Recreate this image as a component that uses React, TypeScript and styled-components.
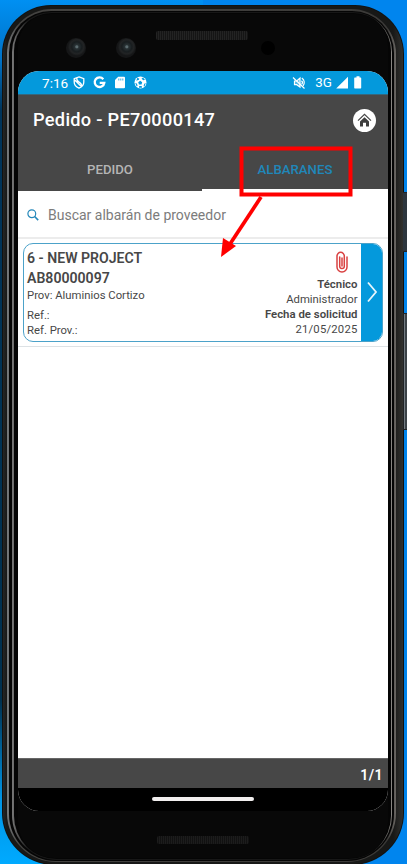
import React from "react";
import styled, { createGlobalStyle } from "styled-components";

const blue = "#0499dc";
const slate = "#474747";

const Global = createGlobalStyle`
  * { box-sizing: border-box; }
  body { margin: 0; font-family: Roboto, "Liberation Sans", sans-serif; overflow: hidden; }
`;

const Desktop = styled.main`
  position: relative;
  width: 407px;
  height: 864px;
  overflow: hidden;
  padding: 5px 0 0 2px;
  background: linear-gradient(90deg, transparent 50%, #0085ee 50%),
    linear-gradient(#0090f2 0, #0072c6 60px, #00345a 110px, #00304e 700px, #0095e6 800px, #00aaff 864px);
`;

const Ring = styled.div<{ $color: string; $pad: string; $radius: string }>`
  background: ${(p) => p.$color};
  padding: ${(p) => p.$pad};
  border-radius: ${(p) => p.$radius};
`;

const Frame = styled(Ring)`
  width: 402px;
`;

const Body = styled.div`
  display: flex;
  flex-direction: column;
  width: 370px;
  height: 844px;
  background: #080808;
  border-radius: 32px 32px 36px 36px;
`;

const TopBezel = styled.div`
  display: flex;
  align-items: flex-start;
  flex: none;
  height: 57px;
  padding: 24px 0 0 48px;
`;

const Camera = styled.div<{ $gap: number }>`
  width: 20px;
  height: 20px;
  margin-right: ${(p) => p.$gap}px;
  border-radius: 50%;
  background: radial-gradient(circle at 54% 44%, #5c6c70 0 1px, #293235 2px, #181d1f 5px, #222425 7px, #151617 9px);
`;

const Speaker = styled.div<{ $top: number; $dim?: boolean }>`
  width: 92px;
  height: ${(p) => (p.$dim ? 8 : 9)}px;
  margin-top: ${(p) => p.$top}px;
  border-radius: 2px;
  background: repeating-linear-gradient(90deg, #232323 0 1px, #151515 1px 2px);
  opacity: ${(p) => (p.$dim ? 0.75 : 1)};
`;

const Sensor = styled.div`
  width: 14px;
  height: 14px;
  margin: 3px 0 0 13px;
  border-radius: 50%;
  background: #000;
`;

const Screen = styled.div`
  display: flex;
  flex-direction: column;
  flex: none;
  width: 370px;
  height: 740px;
  overflow: hidden;
  background: #fff;
  border-radius: 21px;
`;

const StatusBar = styled.div`
  display: flex;
  align-items: center;
  flex: none;
  height: 23px;
  padding: 0 26px 0 24px;
  color: #fff;
  background: ${blue};
  svg { display: block; flex: none; }
`;

const Clock = styled.span`
  width: 31px;
  font-size: 13.6px;
  line-height: 22px;
`;

const StatusGroup = styled.div<{ $gap: number; $end?: boolean }>`
  display: flex;
  align-items: center;
  gap: ${(p) => p.$gap}px;
  margin-left: ${(p) => (p.$end ? "auto" : "0")};
`;

const Network = styled.span`
  margin: 0 4px 0 9px;
  font-size: 13.4px;
  line-height: 22px;
`;

const Header = styled.header`
  display: flex;
  align-items: center;
  justify-content: space-between;
  flex: none;
  height: 54px;
  padding: 0 12px 3px 15px;
  color: #fff;
  background: ${slate};
  border-top: 1px solid #34677d;
`;

const Title = styled.h1`
  margin: 0;
  font-size: 18.2px;
  font-weight: 500;
  line-height: 24px;
  letter-spacing: 0.3px;
  white-space: nowrap;
`;

const HomeButton = styled.button`
  width: 23px;
  height: 23px;
  padding: 0;
  border: 0;
  border-radius: 50%;
  background: #fff;
  svg { display: block; }
`;

const Tabs = styled.nav`
  display: grid;
  grid-template-columns: 184px 186px;
  flex: none;
  height: 43px;
  background: ${slate};
`;

const Tab = styled.button<{ $active?: boolean }>`
  padding: 2px 0 0;
  border: 0;
  border-bottom: 2px solid ${(p) => (p.$active ? "#fff" : slate)};
  color: ${(p) => (p.$active ? "#1f87ba" : "#b5b5b5")};
  background: transparent;
  font: 500 13.2px/20px Roboto, sans-serif;
`;

const Search = styled.label`
  display: flex;
  align-items: center;
  gap: 9px;
  flex: none;
  height: 48px;
  padding: 1px 9px 0;
  border-bottom: 2px solid #ececec;
`;

const SearchInput = styled.input`
  flex: 1;
  min-width: 0;
  padding: 0;
  border: 0;
  outline: 0;
  background: transparent;
  font: 400 14px/20px Roboto, sans-serif;
  color: #444;
  &::placeholder { color: #7c7c7c; opacity: 1; }
`;

const List = styled.section`
  flex: 1;
`;

const ListItem = styled.div`
  height: 108px;
  padding: 4px 5px;
  border-bottom: 1px solid #dde2e5;
`;

const Card = styled.article`
  display: flex;
  height: 99px;
  overflow: hidden;
  border: 1px solid #4ca2c9;
  border-radius: 10px;
  color: #474747;
`;

const CardLeft = styled.div`
  flex: 1;
  padding: 5px 0 0 3px;
`;

const CardTitle = styled.div`
  font-size: 14.1px;
  font-weight: 600;
  line-height: 19.5px;
  white-space: nowrap;
`;

const Detail = styled.div<{ $gap?: number }>`
  margin-top: ${(p) => p.$gap ?? 0}px;
  font-size: 11.3px;
  line-height: 15px;
  white-space: nowrap;
`;

const CardRight = styled.div`
  display: flex;
  flex-direction: column;
  align-items: flex-end;
  padding: 7px 3.5px 0 0;
  font-size: 11.4px;
  line-height: 15px;
  white-space: nowrap;
  svg { flex: none; margin: 0 10px 4px 0; }
`;

const Label = styled.strong`
  font-weight: 600;
`;

const Value = styled.span<{ $spacing?: number }>`
  font-size: 11.3px;
  letter-spacing: ${(p) => p.$spacing ?? 0}px;
`;

const OpenButton = styled.button`
  display: flex;
  align-items: center;
  justify-content: center;
  width: 21px;
  padding: 0 0 2px;
  border: 0;
  background: ${blue};
`;

const Footer = styled.footer`
  display: flex;
  align-items: center;
  justify-content: flex-end;
  flex: none;
  height: 30px;
  padding: 2px 5px 0 0;
  color: #fff;
  background: ${slate};
  border-top: 1px solid #666;
  font-size: 14.2px;
  font-weight: 600;
  letter-spacing: 0.4px;
`;

const NavBar = styled.div`
  display: flex;
  justify-content: center;
  flex: none;
  height: 23px;
  padding-top: 9px;
  background: #000;
`;

const HomeHandle = styled.div`
  width: 102px;
  height: 4px;
  border-radius: 2px;
  background: #f1eeee;
`;

const BottomBezel = styled.div`
  display: flex;
  justify-content: center;
  flex: 1;
`;

const SideKey = styled.div<{ $top: number; $height: number; $shine?: boolean }>`
  position: absolute;
  left: 403px;
  top: ${(p) => p.$top}px;
  width: 4px;
  height: ${(p) => p.$height}px;
  border: solid #202326;
  border-width: 1px 0;
  background: ${(p) => (p.$shine ? "linear-gradient(90deg, #202326 0 1px, #747c82 1px 2px, #3b4247 2px)" : "#2d363e")};
`;

const Annotation = styled.svg`
  position: absolute;
  left: 215px;
  top: 142px;
`;

function StatusIcons() {
  return (
    <StatusGroup $gap={8}>
      <svg width="12" height="13" viewBox="0 0 12 13" fill="none" stroke="currentColor" strokeWidth="1.3">
        <path d="M6 .9 10.8 2.6V6c0 2.8-1.8 5-4.8 6.1C3 11 1.2 8.8 1.2 6V2.6L6 .9ZM3.8 2c-.2 2.2.4 3.2 2.3 4.2 2 1 2.6 2.1 2.3 4M1.5 3.8l7 7" />
      </svg>
      <svg width="13" height="13" viewBox="0 0 13 13" fill="none" stroke="currentColor" strokeWidth="2.3">
        <path d="M10.3 3.2A4.8 4.8 0 1 0 11.3 6.8H6.7" />
      </svg>
      <svg width="12" height="13" viewBox="0 0 12 13">
        <path fill="currentColor" d="M4.2.8H10a1 1 0 0 1 1 1v9.4a1 1 0 0 1-1 1H2a1 1 0 0 1-1-1V4Z" />
        <path stroke={blue} strokeWidth=".8" d="M4.8 2.5v2M6.8 2.5v2M8.8 2.5v2" />
      </svg>
      <svg width="13" height="13" viewBox="0 0 13 13">
        <circle cx="6.5" cy="6.5" r="6" fill="currentColor" />
        <path fill={blue} d="m6.2 4.8 2 1.4-.7 2.4H5L4.2 6.2ZM3.4 1.8l2 .9-.5 1-2.6 1ZM9 1.5l2 2.3-1.7.5-1.8-1.5ZM1.2 7l1.6.6.8 2-.9.9ZM11.8 7l-1.5.7-.7 2.3.8.7ZM5.2 10h2.5l.3 1.7H5Z" />
      </svg>
    </StatusGroup>
  );
}

function SignalIcons() {
  return (
    <StatusGroup $gap={0} $end>
      <svg width="14" height="14" viewBox="0 0 14 14" fill="none" stroke="currentColor" strokeWidth="1.2">
        <path fill="#ffffff55" d="M2.5 5h2.2L8 2v9L4.7 8.7H2.5Z" />
        <path d="m1 1.5 11.5 11M9.5 4.8c1 .9 1 2.6.2 3.5M9.8 2.1c3 1.6 3 5.5 1.3 7.8" />
      </svg>
      <Network>3G</Network>
      <svg width="12" height="13" viewBox="0 0 12 13"><path fill="currentColor" d="M12 .7V12.5H.2Z" /></svg>
      <svg width="14" height="13" viewBox="0 0 14 13"><path fill="currentColor" d="M8.5.3h3v1.3h1.1q.6 0 .6.6v9.6q0 .6-.6.6H6.8q-.6 0-.6-.6V2.2q0-.6.6-.6h1.7Z" /></svg>
    </StatusGroup>
  );
}

function DeviceFrame({ children }: { children: React.ReactNode }) {
  return (
    <Frame $color="#111211" $pad="1px" $radius="49px 49px 52px 52px">
      <Ring $color="linear-gradient(90deg, #252625, #171817 4px, #171817 390px, #32312e)" $pad="3px 7px 2px 4px" $radius="48px 48px 51px 51px">
        <Ring $color="linear-gradient(90deg, #777a7c, #444341 12px, #3b3a38 380px, #696662)" $pad="2px 2px 1px" $radius="45px 45px 49px 49px">
          <Ring $color="#050505" $pad="1px 2px 1px 3px" $radius="42px 42px 47px 47px">
            <Ring $color="linear-gradient(90deg, #777, #171717 16px, #171717 362px, #898783)" $pad="1px 1px 1px 2px" $radius="40px 40px 45px 45px">
              <Ring $color="#050505" $pad="1px 3px 1px 4px" $radius="38px 38px 43px 43px">
                {children}
              </Ring>
            </Ring>
          </Ring>
        </Ring>
      </Ring>
    </Frame>
  );
}

export default function App() {
  return (
    <>
      <Global />
      <Desktop>
        <DeviceFrame>
          <Body>
            <TopBezel>
              <Camera $gap={30} />
              <Camera $gap={20} />
              <Speaker $top={-7} />
              <Sensor />
            </TopBezel>
            <Screen>
              <StatusBar><Clock>7:16</Clock><StatusIcons /><SignalIcons /></StatusBar>
              <Header>
                <Title>Pedido - PE70000147</Title>
                <HomeButton aria-label="Inicio">
                  <svg width="23" height="23" viewBox="0 0 23 23">
                    <path d="m5 11.6 6.5-6.2 6.5 6.2" fill="none" stroke={slate} strokeWidth="1.2" />
                    <path d="m7 12.5 4.5-4.2 4.5 4.2v5.1h-3v-3.9h-3v3.9H7Z" fill="#3e3e3e" />
                  </svg>
                </HomeButton>
              </Header>
              <Tabs><Tab>PEDIDO</Tab><Tab $active>ALBARANES</Tab></Tabs>
              <Search>
                <svg width="12" height="12" viewBox="0 0 12 12" fill="none" stroke="#2588ba" strokeWidth="1.2">
                  <circle cx="4.8" cy="4.7" r="3.9" /><path d="m7.6 7.5 3.6 3.6" strokeWidth="1.6" />
                </svg>
                <SearchInput placeholder="Buscar albarán de proveedor" />
              </Search>
              <List>
                <ListItem>
                  <Card>
                    <CardLeft>
                      <CardTitle>6 - NEW PROJECT</CardTitle>
                      <CardTitle>AB80000097</CardTitle>
                      <Detail>Prov: Aluminios Cortizo</Detail>
                      <Detail $gap={5}>Ref.:</Detail>
                      <Detail>Ref. Prov.:</Detail>
                    </CardLeft>
                    <CardRight>
                      <svg width="12" height="22" viewBox="0 0 12 22" fill="none" stroke="#d94141" strokeWidth="1.5" strokeLinecap="round">
                        <path d="M3.7 6v9.3a2.3 2.3 0 0 0 4.6 0V5A3.5 3.5 0 0 0 1 5v11a5 5 0 0 0 10 0V6M6 7v8" />
                      </svg>
                      <Label>Técnico</Label>
                      <Value>Administrador</Value>
                      <Label>Fecha de solicitud</Label>
                      <Value $spacing={0.2}>21/05/2025</Value>
                    </CardRight>
                    <OpenButton aria-label="Abrir albarán">
                      <svg width="12" height="22" viewBox="0 0 12 22"><path d="m2 1.5 8 9.5-8 9.5" fill="none" stroke="#e5f5fc" strokeWidth="1.8" /></svg>
                    </OpenButton>
                  </Card>
                </ListItem>
              </List>
              <Footer>1/1</Footer>
              <NavBar><HomeHandle /></NavBar>
            </Screen>
            <BottomBezel><Speaker $top={25} $dim /></BottomBezel>
          </Body>
        </DeviceFrame>
        <SideKey $top={192} $height={60} />
        <SideKey $top={313} $height={117} $shine />
        <Annotation width="140" height="122" viewBox="0 0 140 122" fill="none" stroke="#ff0000">
          <path d="M26.5 6.5h109v46h-109Z" strokeWidth="4" />
          <path d="M46 55 15 102" strokeWidth="3.7" />
          <path d="m6 115 2-19 13 8Z" fill="#ff0000" stroke="none" />
        </Annotation>
      </Desktop>
    </>
  );
}
